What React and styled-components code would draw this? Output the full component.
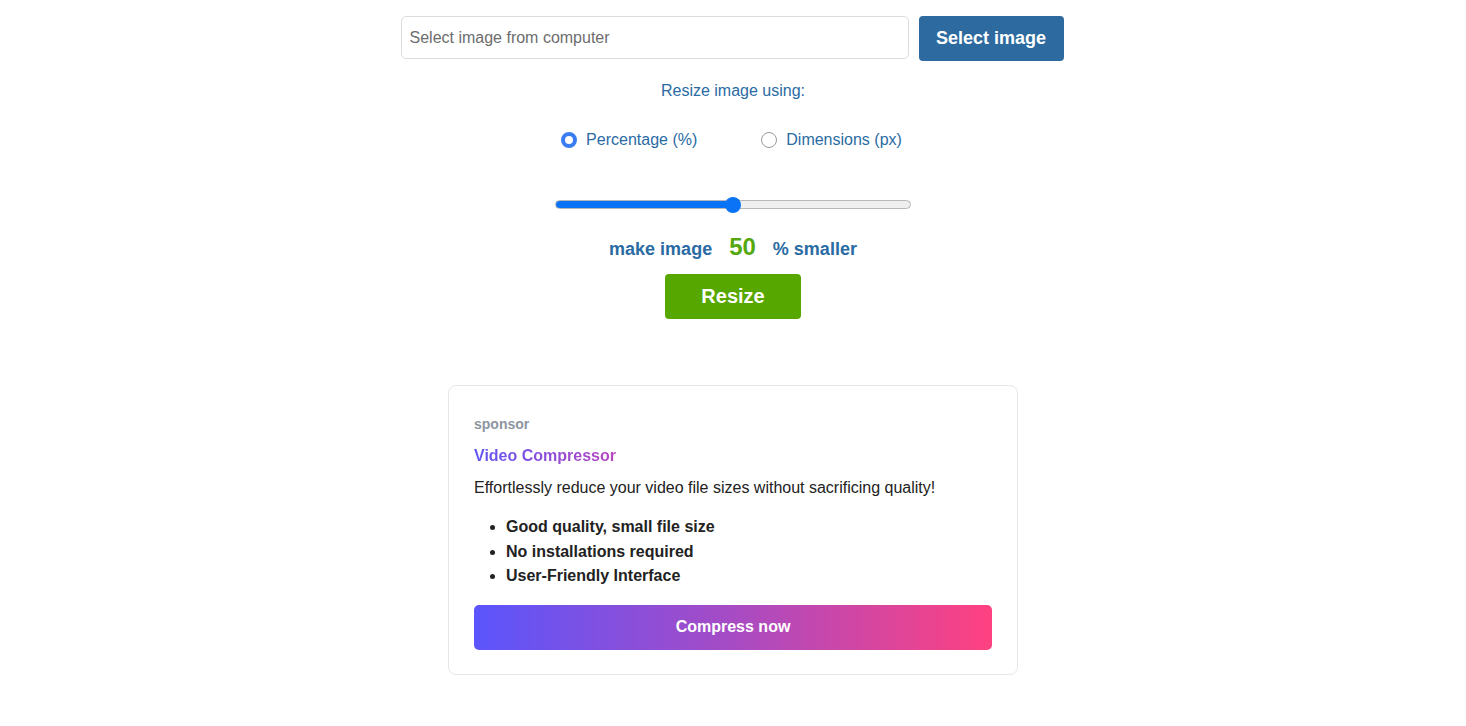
import React, { useState } from "react";
import styled, { createGlobalStyle } from "styled-components";

const GlobalStyles = createGlobalStyle`
  html, body {
    margin: 0;
    padding: 0;
    background: #ffffff;
  }
  body, * {
    font-family: "Liberation Sans", Arial, Helvetica, sans-serif;
    box-sizing: border-box;
  }
`;

const Page = styled.main`
  width: 100%;
  min-height: 726px;
  display: flex;
  flex-direction: column;
  align-items: center;
  padding-top: 16px;
`;

const Picker = styled.div`
  display: flex;
  align-items: flex-start;
  gap: 10px;
  margin-left: -2px;
`;

const PathInput = styled.input`
  width: 508px;
  height: 43px;
  border: 1px solid #dcdcdc;
  border-radius: 5px;
  padding: 0 8px;
  font-size: 16px;
  color: #555;
  background: #fff;
  outline: none;
  &::placeholder {
    color: #6d6d6d;
  }
`;

const Button = styled.button`
  border: none;
  border-radius: 4px;
  color: #fff;
  font-weight: bold;
  cursor: pointer;
  height: 45px;
  width: ${(p) => p.$width}px;
  font-size: ${(p) => p.$size || 18}px;
  background: ${(p) => p.$bg};
`;

const Caption = styled.div`
  margin-top: 21px;
  font-size: 16px;
  color: #2a6ba3;
`;

const RadioRow = styled.div`
  display: flex;
  gap: 64px;
  margin-top: 31px;
  margin-left: -3px;
`;

const RadioLabel = styled.label`
  display: flex;
  align-items: center;
  gap: 9px;
  font-size: 16px;
  color: #2a6ba3;
  cursor: pointer;
`;

const RadioDot = styled.span`
  width: 16px;
  height: 16px;
  border-radius: 50%;
  background: #fff;
  border: ${(p) => (p.$on ? "4.5px solid #3a7df1" : "1px solid #9a9a9a")};
`;

const Range = styled.input`
  -webkit-appearance: none;
  appearance: none;
  width: 356px;
  height: 9px;
  margin: 51px 0 0 0;
  border-radius: 5px;
  border: 1px solid #b7b7b7;
  background: linear-gradient(
    to right,
    #0b73f5 0%,
    #0b73f5 ${(p) => p.$fill}%,
    #efefef ${(p) => p.$fill}%,
    #efefef 100%
  );
  outline: none;
  &::-webkit-slider-thumb {
    -webkit-appearance: none;
    width: 16px;
    height: 16px;
    border-radius: 50%;
    background: #0b73f5;
    border: none;
  }
`;

const Amount = styled.div`
  display: flex;
  align-items: baseline;
  gap: 17px;
  margin-top: 24px;
  font-size: 18px;
  font-weight: bold;
  color: #2a6ba3;
`;

const Value = styled.span`
  font-size: 24px;
  color: #56a80f;
`;

const ResizeWrap = styled.div`
  margin-top: 13px;
`;

const Card = styled.section`
  width: 570px;
  margin-top: 66px;
  border: 1px solid #e6e7ea;
  border-radius: 8px;
  padding: 30px 25px 24px;
  color: #222;
`;

const Sponsor = styled.div`
  font-size: 14px;
  font-weight: bold;
  color: #8d959f;
`;

const Title = styled.div`
  margin-top: 15px;
  font-size: 16px;
  font-weight: bold;
  background: linear-gradient(to right, #6056f5, #c143b8 160px);
  -webkit-background-clip: text;
  background-clip: text;
  color: transparent;
  display: inline-block;
`;

const Blurb = styled.p`
  margin: 14px 0 0;
  font-size: 16px;
  color: #222;
`;

const Features = styled.ul`
  margin: 18px 0 0;
  padding-left: 32px;
  font-size: 16px;
  font-weight: bold;
  line-height: 24.5px;
  color: #222;
`;

const Cta = styled.button`
  display: block;
  width: 100%;
  height: 45px;
  margin-top: 16px;
  border: none;
  border-radius: 5px;
  background: linear-gradient(to right, #5b55fc, #a74bc4 50%, #ff4180);
  color: #fff;
  font-size: 16px;
  font-weight: bold;
  cursor: pointer;
`;

export default function App() {
  const [mode, setMode] = useState("percent");
  const [pct, setPct] = useState(50);

  return (
    <>
      <GlobalStyles />
      <Page>
        <Picker>
          <PathInput placeholder="Select image from computer" readOnly />
          <Button $bg="#2c6a9f" $width={145}>Select image</Button>
        </Picker>

        <Caption>Resize image using:</Caption>

        <RadioRow>
          <RadioLabel onClick={() => setMode("percent")}>
            <RadioDot $on={mode === "percent"} />
            Percentage (%)
          </RadioLabel>
          <RadioLabel onClick={() => setMode("px")}>
            <RadioDot $on={mode === "px"} />
            Dimensions (px)
          </RadioLabel>
        </RadioRow>

        <Range
          type="range"
          min="0"
          max="100"
          value={pct}
          $fill={pct}
          onChange={(e) => setPct(Number(e.target.value))}
        />

        <Amount>
          <span>make image</span>
          <Value>{pct}</Value>
          <span>% smaller</span>
        </Amount>

        <ResizeWrap>
          <Button $bg="#56a700" $width={136} $size={20}>Resize</Button>
        </ResizeWrap>

        <Card>
          <Sponsor>sponsor</Sponsor>
          <Title>Video Compressor</Title>
          <Blurb>Effortlessly reduce your video file sizes without sacrificing quality!</Blurb>
          <Features>
            <li>Good quality, small file size</li>
            <li>No installations required</li>
            <li>User-Friendly Interface</li>
          </Features>
          <Cta>Compress now</Cta>
        </Card>
      </Page>
    </>
  );
}
